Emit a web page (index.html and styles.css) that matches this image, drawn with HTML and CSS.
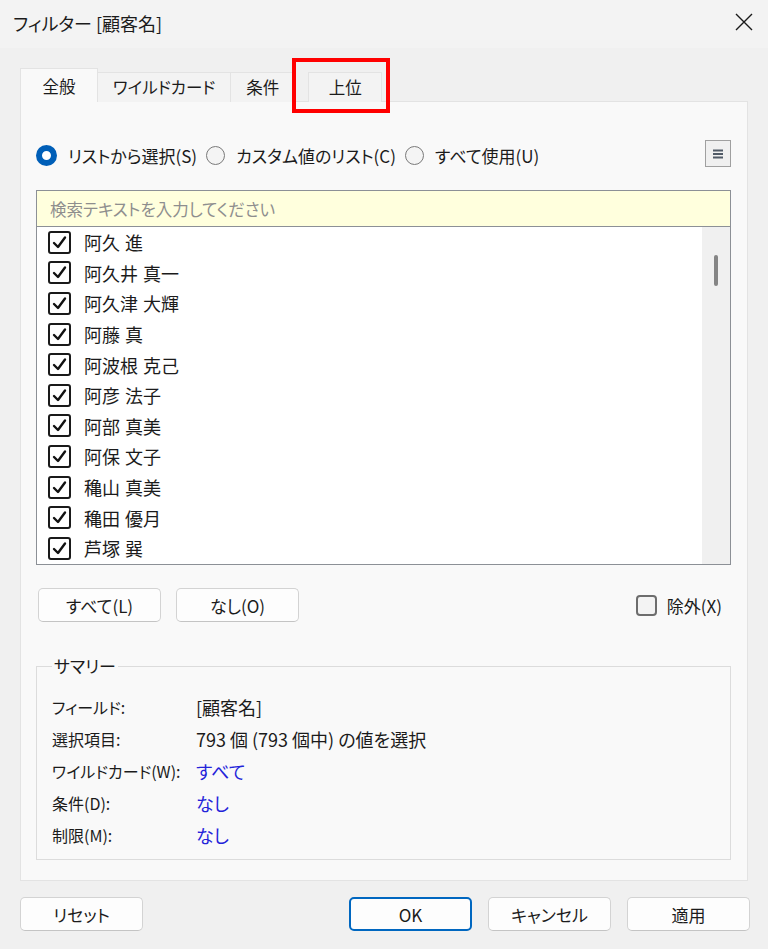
FILE: index.html
```html
<!DOCTYPE html>
<html lang="ja">
<head>
    <meta charset="UTF-8">
    <meta name="viewport" content="width=device-width, initial-scale=1.0">
    <title>フィルター [顧客名]</title>
    <link rel="stylesheet" href="styles.css">
</head>
<body>
    <div class="window">
        <div class="titlebar">
            <span class="title">フィルター [顧客名]</span>
            <svg class="close-icon" width="18" height="18" viewBox="0 0 18 18">
                <path d="M1 1 L17 17 M17 1 L1 17" stroke="#1a1a1a" stroke-width="1.4" fill="none"/>
            </svg>
        </div>

        <div class="content">
            <div class="tabs">
                <div class="tab active">全般</div>
                <div class="tab">ワイルドカード</div>
                <div class="tab">条件</div>
                <div class="tab tab-top">上位</div>
            </div>

            <div class="panel">
                <div class="mode-row">
                    <label class="radio"><span class="radio-dot checked"></span>リストから選択(S)</label>
                    <label class="radio"><span class="radio-dot"></span>カスタム値のリスト(C)</label>
                    <label class="radio"><span class="radio-dot"></span>すべて使用(U)</label>
                    <span class="menu-btn">
                        <svg width="12" height="12" viewBox="0 0 12 12">
                            <path d="M1 2.5 H11 M1 6 H11 M1 9.5 H11" stroke="#505a66" stroke-width="2"/>
                        </svg>
                    </span>
                </div>

                <div class="listbox">
                    <input class="search" type="text" placeholder="検索テキストを入力してください">
                    <div class="list-area">
                        <div class="items" id="items"></div>
                        <div class="scrollbar"><div class="thumb"></div></div>
                    </div>
                </div>

                <div class="list-actions">
                    <button class="btn">すべて(L)</button>
                    <button class="btn">なし(O)</button>
                    <label class="exclude"><span class="box"></span>除外(X)</label>
                </div>

                <fieldset class="summary">
                    <legend>サマリー</legend>
                    <div class="summary-grid">
                        <span class="key">フィールド:</span><span class="val">[顧客名]</span>
                        <span class="key">選択項目:</span><span class="val">793 個 (793 個中) の値を選択</span>
                        <span class="key">ワイルドカード(W):</span><span class="val link">すべて</span>
                        <span class="key">条件(D):</span><span class="val link">なし</span>
                        <span class="key">制限(M):</span><span class="val link">なし</span>
                    </div>
                </fieldset>
            </div>

            <div class="footer">
                <button class="btn">リセット</button>
                <span class="spacer"></span>
                <button class="btn primary">OK</button>
                <button class="btn">キャンセル</button>
                <button class="btn">適用</button>
            </div>
        </div>

        <div class="highlight"></div>
    </div>

    <script>
        const names = ['阿久 進', '阿久井 真一', '阿久津 大輝', '阿藤 真', '阿波根 克己', '阿彦 法子',
            '阿部 真美', '阿保 文子', '穐山 真美', '穐田 優月', '芦塚 巽'];
        const check = '<svg width="17" height="17" viewBox="0 0 17 17"><path d="M3 9 L7 13 L14 3.5" stroke="#111" stroke-width="2.4" fill="none" stroke-linecap="round" stroke-linejoin="round"/></svg>';
        document.getElementById('items').innerHTML = names.map(name =>
            `<div class="item"><span class="check">${check}</span><span>${name}</span></div>`
        ).join('');
    </script>
</body>
</html>
```

FILE: styles.css
```css
body {
    margin: 0;
    background: #f0f0f0;
    font-family: "Noto Sans CJK JP", "Noto Sans", sans-serif;
    font-feature-settings: "palt";
    font-size: 17px;
    color: #1b1b1b;
}
.window {
    position: relative;
    width: 768px;
    height: 949px;
    overflow: hidden;
}
.titlebar {
    height: 48px;
    background: #f3f3f3;
    display: flex;
    align-items: center;
    padding: 0 15px 0 13px;
}
.title {
    flex: 1;
    font-size: 18px;
    margin-top: -2px;
}
.close-icon {
    margin-top: -4px;
}
.content {
    padding: 20px 20px 0 20px;
}
.tabs {
    display: flex;
    align-items: flex-end;
    height: 34px;
    margin-bottom: -1px;
    position: relative;
}
.tab {
    height: 30px;
    line-height: 29px;
    padding: 0 15px;
    box-sizing: border-box;
    border: 1px solid #e3e3e3;
    border-bottom: none;
    border-left: none;
    background: #f3f3f3;
    font-size: 16.5px;
}
.tab.active {
    height: 34px;
    line-height: 34px;
    width: 78px;
    text-align: center;
    border-left: 1px solid #e3e3e3;
    background: #f9f9f9;
    z-index: 1;
}
.tab-top {
    margin-left: 13px;
    border-left: 1px solid #e3e3e3;
    width: 74px;
    text-align: center;
}
.panel {
    height: 780px;
    box-sizing: border-box;
    background: #f9f9f9;
    border: 1px solid #e3e3e3;
    padding: 39px 16px 0 15px;
}
.mode-row {
    display: flex;
    align-items: center;
    height: 28px;
}
.radio {
    display: flex;
    align-items: center;
    gap: 11px;
    margin-right: 9px;
}
.radio-dot {
    width: 19px;
    height: 19px;
    border-radius: 50%;
    border: 1px solid #7a7a7a;
    background: #f4f4f4;
    box-sizing: border-box;
}
.radio-dot.checked {
    border: 6px solid #005fb8;
    background: #ffffff;
    width: 21px;
    height: 21px;
}
.menu-btn {
    margin-left: auto;
    margin-top: -3px;
    width: 26px;
    height: 27px;
    box-sizing: border-box;
    border: 1px solid #a0a0a0;
    background: #f0f0f0;
    display: flex;
    align-items: center;
    justify-content: center;
}
.listbox {
    margin-top: 21px;
    height: 375px;
    box-sizing: border-box;
    border: 1px solid #8c9096;
    display: flex;
    flex-direction: column;
    background: #ffffff;
}
.search {
    height: 36px;
    box-sizing: border-box;
    border: none;
    border-bottom: 1px solid #8c9096;
    background: #ffffdd;
    font-family: inherit;
    font-feature-settings: "palt";
    font-size: 16.5px;
    padding: 0 13px;
    margin: 0;
    outline: none;
}
.search::placeholder {
    color: #8e8e8e;
}
.list-area {
    flex: 1;
    display: flex;
    overflow: hidden;
}
.items {
    flex: 1;
}
.item {
    height: 30.6px;
    display: flex;
    align-items: center;
    padding-left: 11px;
    gap: 13px;
    font-size: 18px;
    font-feature-settings: normal;
    word-spacing: 1px;
}
.check {
    width: 23px;
    height: 23px;
    box-sizing: border-box;
    border: 2px solid #1a1a1a;
    border-radius: 3px;
    display: flex;
    align-items: center;
    justify-content: center;
}
.scrollbar {
    width: 28px;
    background: #f0f0f0;
    padding: 28px 0 0 12px;
    box-sizing: border-box;
}
.thumb {
    width: 4px;
    height: 31px;
    border-radius: 2px;
    background: #858585;
}
.list-actions {
    margin-top: 23px;
    display: flex;
    align-items: center;
    gap: 15px;
    padding-left: 2px;
}
.btn {
    width: 123px;
    height: 34px;
    box-sizing: border-box;
    background: #fdfdfd;
    border: 1px solid #d3d3d3;
    border-bottom-color: #c4c4c4;
    border-radius: 5px;
    font-family: inherit;
    font-feature-settings: "palt";
    font-size: 17px;
    color: #1b1b1b;
    padding: 0;
}
.btn.primary {
    border: 2px solid #0067c0;
}
.exclude {
    margin-left: auto;
    margin-right: 9px;
    display: flex;
    align-items: center;
    gap: 10px;
}
.box {
    width: 21px;
    height: 21px;
    box-sizing: border-box;
    border: 2px solid #6d6d6d;
    border-radius: 4px;
    background: #f3f3f3;
}
.summary {
    margin: 32px 0 0 0;
    border: 1px solid #dcdcdc;
    padding: 0 14px 8px 15px;
    min-width: 0;
}
.summary legend {
    padding: 0 2px;
    line-height: 24px;
    font-size: 17px;
}
.summary-grid {
    margin-top: 13px;
    display: grid;
    grid-template-columns: 144px 1fr;
    line-height: 32px;
}
.key {
    font-size: 16px;
    white-space: nowrap;
}
.val {
    font-size: 18px;
    white-space: nowrap;
}
.link {
    color: #2424d9;
}
.footer {
    display: flex;
    margin-top: 16px;
    gap: 16px;
    margin-right: -2px;
}
.spacer {
    flex: 1;
}
.highlight {
    position: absolute;
    left: 292px;
    top: 58px;
    width: 98px;
    height: 55px;
    box-sizing: border-box;
    border: 4px solid #ff0000;
    z-index: 2;
}
```
